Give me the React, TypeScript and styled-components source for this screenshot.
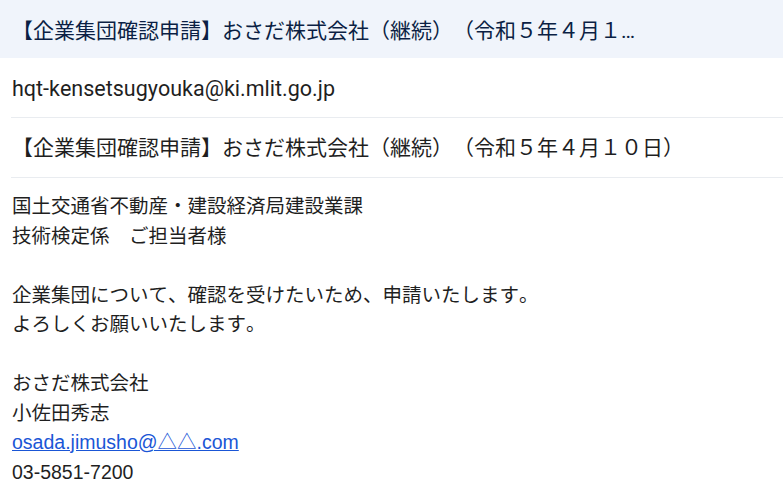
import React from "react";
import styled, { createGlobalStyle } from "styled-components";

const Global = createGlobalStyle`
  html, body { margin: 0; padding: 0; background: #ffffff; }
  body {
    font-family: "Liberation Sans", "Noto Sans CJK JP", sans-serif;
    text-spacing-trim: space-all;
    font-kerning: none;
  }
`;

const Page = styled.div`
  width: 783px;
  height: 488px;
  overflow: hidden;
  background: #ffffff;
  display: flex;
  flex-direction: column;
`;

const TitleBar = styled.div`
  height: 58px;
  background: #f0f4fb;
  display: flex;
  align-items: center;
  padding: 0 12px;
  box-sizing: border-box;
`;

const Title = styled.div`
  max-width: 626px;
  font-family: Roboto, "Noto Sans CJK JP", sans-serif;
  font-size: 21px;
  color: #0b1f44;
  white-space: nowrap;
  overflow: hidden;
  text-overflow: ellipsis;
  margin-top: -1px;
`;

const Row = styled.div<{ $size: number; $top: number; $bottom: number }>`
  height: 60px;
  margin-left: 11px;
  border-bottom: 1px solid #e9ecf0;
  display: flex;
  align-items: center;
  padding-left: 1px;
  padding-top: ${(p) => p.$top}px;
  padding-bottom: ${(p) => p.$bottom}px;
  box-sizing: border-box;
  font-family: Roboto, "Noto Sans CJK JP", sans-serif;
  font-size: ${(p) => p.$size}px;
  color: #1f1f1f;
  white-space: nowrap;
`;

const Body = styled.div`
  padding: 14px 12px 0;
  font-size: 19.5px;
  line-height: 29.5px;
  color: #1f1f1f;
`;

const Line = styled.div`
  min-height: 29.5px;
  white-space: nowrap;
`;

const Link = styled.a`
  color: #1a56d6;
  text-decoration: underline;
`;

const subject = "【企業集団確認申請】おさだ株式会社（継続）（令和５年４月１０日）";

export default function App() {
  return (
    <Page>
      <Global />
      <TitleBar>
        <Title>{subject}</Title>
      </TitleBar>
      <Row $size={21.5} $top={2} $bottom={0}>hqt-kensetsugyouka@ki.mlit.go.jp</Row>
      <Row $size={21} $top={0} $bottom={3}>{subject}</Row>
      <Body>
        <Line>国土交通省不動産・建設経済局建設業課</Line>
        <Line>技術検定係　ご担当者様</Line>
        <Line />
        <Line>企業集団について、確認を受けたいため、申請いたします。</Line>
        <Line>よろしくお願いいたします。</Line>
        <Line />
        <Line>おさだ株式会社</Line>
        <Line>小佐田秀志</Line>
        <Line>
          <Link href="#">osada.jimusho@△△.com</Link>
        </Line>
        <Line>03-5851-7200</Line>
      </Body>
    </Page>
  );
}
